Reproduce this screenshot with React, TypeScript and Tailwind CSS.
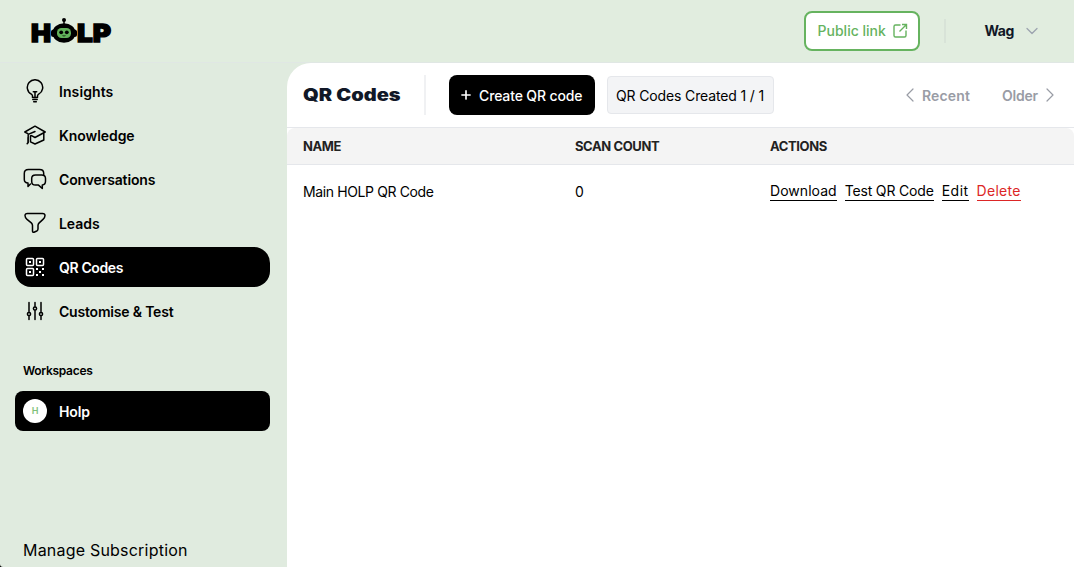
import type { ReactNode } from "react";
import { ChevronDown, ChevronLeft, ChevronRight, Plus } from "lucide-react";

type NavItem = { label: string; icon: ReactNode; active?: boolean; tracking: string };

function Icon({ children }: { children: ReactNode }) {
  return (
    <svg
      viewBox="0 0 24 24"
      className="size-6 shrink-0"
      fill="none"
      stroke="currentColor"
      strokeWidth="1.5"
      strokeLinecap="round"
      strokeLinejoin="round"
    >
      {children}
    </svg>
  );
}

function Logo() {
  return (
    <svg viewBox="0 0 82 28" className="h-7 w-[82px] overflow-visible" aria-label="HOLP">
      <g fontFamily="Inter, sans-serif" fontWeight="900" fontSize="25" stroke="#000" strokeWidth="1.4">
        <text x="1" y="24.8" textLength="20" lengthAdjust="spacingAndGlyphs">H</text>
        <text x="47" y="24.8" textLength="34" lengthAdjust="spacingAndGlyphs">LP</text>
      </g>
      <circle cx="34" cy="3" r="2" />
      <path d="M34 3v5" stroke="#000" strokeWidth="1.5" />
      <ellipse cx="34" cy="16" rx="11.5" ry="9.8" />
      <rect x="21" y="12.5" width="26" height="7.5" rx="2.5" />
      <rect x="27" y="11" width="14" height="10" rx="4.5" fill="#62b15b" />
      <circle cx="31.2" cy="15.3" r="1.9" />
      <circle cx="36.8" cy="15.3" r="1.9" />
      <path d="M32.5 18.6q1.500.8 3 0" fill="none" stroke="#000" strokeWidth="0.7" />
    </svg>
  );
}

const nav: NavItem[] = [
  {
    label: "Insights",
    tracking: "tracking-[0.006em]",
    icon: (
      <Icon>
        <path d="M9.5 18.500v-1.500c0-.8-.5-1.300-1.200-1.800a7.700 7.700 0 1 1 7.400 0c-.7.500-1.200 1-1.200 1.800v1.500z" />
        <path d="M12 18.500v-5.500M10.300 12.800h3.400M9.800 20.600h4.400M10.700 22.700h2.600" />
      </Icon>
    ),
  },
  {
    label: "Knowledge",
    tracking: "tracking-[-0.005em]",
    icon: (
      <Icon>
        <path d="M1.8 9 12 3.2 22.2 9 12 14.5 8.5 12.6M1.8 9l3 1.6M12 8.5 5.2 11.4v8.3M5 14.5v5.3l-.8.8M20.8 10v7L12 21l-4.500-2.200v-6" />
      </Icon>
    ),
  },
  {
    label: "Conversations",
    tracking: "tracking-[-0.01em]",
    icon: (
      <Icon>
        <path d="M7.500 17 5 19.500v-3.500c-2.500-.2-3.700-1.300-3.700-3.600V6.500C1.300 3.800 2.800 2.600 5.500 2.600h11c2.700 0 4.200 1.200 4.200 3.700v1.500" />
        <path d="M12.500 8h6.200c2.500 0 3.800 1.200 3.800 3.500v2.800c0 2.300-1 3.500-3.200 3.700v3.500l-3.800-3.400h-3c-2.500 0-3.800-1.200-3.800-3.600v-3C8.700 9.200 10 8 12.500 8Z" />
      </Icon>
    ),
  },
  {
    label: "Leads",
    tracking: "tracking-[-0.004em]",
    icon: (
      <Icon>
        <path d="M4.500 2.400h15c1.700 0 2.500.7 2.500 2.200 0 1.700-.7 2.600-2 3.800l-3.800 3.500c-.8.800-1.200 1.500-1.200 2.600v3.600c0 .9-.4 1.500-1.200 1.900l-2.800 1.200c-.9.3-1.500-.2-1.500-1.100v-5.600c0-1.100-.4-1.800-1.200-2.600L4 8.400C2.700 7.200 2 6.300 2 4.600c0-1.500.8-2.200 2.500-2.200Z" />
      </Icon>
    ),
  },
  {
    label: "QR Codes",
    tracking: "tracking-[-0.026em]",
    active: true,
    icon: (
      <Icon>
        <rect x="3.500" y="3.500" width="7" height="7" rx="1" />
        <rect x="13.500" y="3.500" width="7" height="7" rx="1" />
        <rect x="3.500" y="13.500" width="7" height="7" rx="1" />
        <path
          d="M6 6h2v2H6zM16 6h2v2h-2zM6 16h2v2H6zM13 13h2v2h-2zM19 13h2v2h-2zM16 16h2v2h-2zM13 19h2v2h-2zM19 19h2v2h-2z"
          fill="currentColor"
          stroke="none"
        />
      </Icon>
    ),
  },
  {
    label: "Customise & Test",
    tracking: "tracking-[-0.014em]",
    icon: (
      <Icon>
        <path d="M6 3.500v9M6 17v3.500M12 3.500v4M12 11.500v9M18 3.500v9M18 17v3.500" />
        <circle cx="6" cy="15" r="1.600" />
        <circle cx="12" cy="9.500" r="1.600" />
        <circle cx="18" cy="15" r="1.600" />
      </Icon>
    ),
  },
];

const actions = [
  { label: "Download", style: "border-black text-black tracking-[0.003em]" },
  { label: "Test QR Code", style: "border-black text-black tracking-[-0.012em]" },
  { label: "Edit", style: "border-black text-black tracking-[0.035em]" },
  { label: "Delete", style: "border-[#dc2626] text-[#dc2626] tracking-[0.018em]" },
];

function TopBar() {
  return (
    <header className="flex h-[63px] shrink-0 items-center border-b border-[#e0e7e4] bg-[#e1eddf] pr-8 pl-[30px]">
      <Logo />
      <button className="ml-auto flex h-10 w-[116px] items-center gap-1.5 rounded-lg border-2 border-[#66b35f] bg-white pl-3 text-sm font-medium whitespace-nowrap text-[#66b35f]">
        <span>Public link</span>
        <svg viewBox="0 0 16 16" className="size-4 shrink-0" fill="none" stroke="currentColor" strokeWidth="1.400">
          <path d="M8.500 2H3.500Q2 2 2 3.500v9Q2 14 3.500 14h9q1.500 0 1.500-1.500V7.500M10 1.500h4.500V6M14.500 1.500 7.500 8.500" />
        </svg>
      </button>
      <div className="ml-6 h-6 w-0.5 bg-[#d8e3d8]" />
      <div className="ml-[39px] flex items-center gap-2 text-sm font-bold text-[#111827]">
        <span className="tracking-[-0.03em]">Wag</span>
        <ChevronDown className="size-5 text-[#9ca3af]" strokeWidth={1.5} />
      </div>
    </header>
  );
}

function Sidebar() {
  return (
    <aside className="relative flex w-[287px] shrink-0 flex-col bg-[#e0ebdf] pt-2 pr-[17px] pl-[15px]">
      <nav className="flex flex-col gap-1">
        {nav.map((item) => (
          <a
            key={item.label}
            className={`flex h-10 items-center gap-3 px-2 text-sm font-semibold ${
              item.active ? "rounded-2xl bg-black text-white" : "text-black"
            }`}
          >
            {item.icon}
            <span className={`pt-px ${item.tracking}`}>{item.label}</span>
          </a>
        ))}
      </nav>
      <h2 className="mt-7 px-2 text-xs leading-6 font-semibold tracking-[-0.025em]">Workspaces</h2>
      <a className="mt-2 flex h-10 shrink-0 items-center gap-3 rounded-lg bg-black px-2 text-sm font-semibold text-white">
        <span className="flex size-6 items-center justify-center rounded-full bg-white text-[9px] font-semibold text-[#7fc07a]">
          H
        </span>
        <span className="pt-px tracking-[-0.01em]">Holp</span>
      </a>
      <a className="mt-auto px-2 pb-[5px] text-base tracking-[0.013em]">Manage Subscription</a>
      <svg viewBox="0 0 3 3" className="absolute bottom-0 left-0 size-[3px]">
        <path d="M0 0v3h3Q0 3 0 0Z" />
      </svg>
    </aside>
  );
}

export default function App() {
  return (
    <div className="flex h-[567px] w-[1074px] flex-col overflow-hidden bg-white font-['Inter',sans-serif] text-black">
      <TopBar />
      <div className="flex min-h-0 flex-1">
        <Sidebar />
        <div className="flex-1 bg-[#e0ebdf]">
          <main className="h-full rounded-tl-[24px] bg-white">
            <div className="flex h-16 items-center px-4">
              <h1 className="w-[121px] pt-px text-[17px] font-black text-[#111827]">
                <span className="inline-block origin-left scale-x-[1.18]">QR Codes</span>
              </h1>
              <div className="h-10 w-0.5 bg-[#f0f1f3]" />
              <button className="ml-[23px] flex h-10 w-[146px] items-center gap-1.5 rounded-lg bg-black pl-[10px] text-sm font-medium whitespace-nowrap text-white">
                <Plus className="size-3.5" strokeWidth={2.8} />
                <span className="pt-px tracking-[-0.01em]">Create QR code</span>
              </button>
              <div className="ml-3 flex h-[38px] w-[167px] items-center rounded border border-[#e5e7eb] bg-[#f3f4f6] pl-2 text-sm whitespace-nowrap">
                <span className="pt-px tracking-[-0.01em]">QR Codes Created 1 / 1</span>
              </div>
              <div className="-mr-1 ml-auto flex items-center text-sm font-semibold text-[#999ca5]">
                <ChevronLeft className="size-6" strokeWidth={1.2} />
                <span className="pt-px tracking-[0.01em]">Recent</span>
                <span className="ml-8 pt-px tracking-[-0.014em]">Older</span>
                <ChevronRight className="size-6" strokeWidth={1.2} />
              </div>
            </div>
            <div className="border-y border-[#e5e7eb]">
              <div className="grid h-9 grid-cols-[272px_195px_1fr] items-center rounded-t-lg bg-[#f4f4f4] px-4 pt-px text-[13px] font-bold tracking-[-0.03em] text-[#222]">
                <span>NAME</span>
                <span>SCAN COUNT</span>
                <span>ACTIONS</span>
              </div>
            </div>
            <div className="grid h-[53px] grid-cols-[272px_195px_1fr] items-center px-4 text-sm">
              <span className="tracking-[-0.027em]">Main HOLP QR Code</span>
              <span>0</span>
              <div className="flex gap-2 whitespace-nowrap">
                {actions.map((a) => (
                  <a key={a.label} className={`border-b leading-[18px] ${a.style}`}>
                    {a.label}
                  </a>
                ))}
              </div>
            </div>
          </main>
        </div>
      </div>
    </div>
  );
}
